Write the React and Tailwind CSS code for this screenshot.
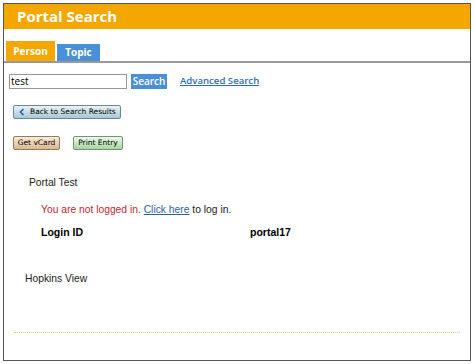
export default function App() {
  return (
    <div className="h-[364px] w-[474px] bg-white p-[3px]" style={{ fontFamily: "'Liberation Sans', Arial, sans-serif" }}>
      <div className="flex h-[358px] flex-col border border-[#555] bg-white">
        {/* header bar */}
        <div className="flex h-[25px] items-center bg-[#f4a700] pl-[13px]">
          <span className="text-[15px] font-bold text-white" style={{ fontFamily: "'Open Sans', sans-serif" }}>
            Portal Search
          </span>
        </div>

        {/* tabs */}
        <div className="mt-[12px] flex items-end gap-[2px] border-b-2 border-[#999] pl-[2px]" style={{ fontFamily: "'Open Sans', sans-serif" }}>
          <div className="flex h-[20px] w-[49px] items-center justify-center bg-[#f4a700] text-[10px] font-bold text-white">Person</div>
          <div className="flex h-[17px] w-[43px] items-center justify-center bg-[#4a90d9] text-[10px] font-bold text-white">Topic</div>
        </div>

        {/* search row */}
        <div className="mt-[11px] flex items-center pl-[5px]" style={{ fontFamily: "'Open Sans', sans-serif" }}>
          <div className="flex h-[15px] w-[118px] items-center border border-[#999] pl-[1px] text-[10px] text-black">test</div>
          <div className="ml-[4px] flex h-[15px] w-[36px] items-center justify-center bg-[#4a90d9] text-[10px] font-semibold text-white">
            Search
          </div>
          <a className="ml-[13px] text-[9.6px] font-semibold text-[#2f6fb0] underline">Advanced Search</a>
        </div>

        {/* back button */}
        <div className="mt-[16px] pl-[9px]" style={{ fontFamily: "'DejaVu Sans', Verdana, sans-serif" }}>
          <div className="flex h-[14px] w-[108px] items-center rounded-[2px] border border-[#6a8a9a] bg-gradient-to-b from-[#e8f3f8] to-[#a9c7d4] pl-[5px] text-[7.5px] text-black">
            <svg width="6" height="8" viewBox="0 0 6 8" className="mr-[5px]">
              <path d="M4.5 1 L1.5 4 L4.5 7" stroke="#2a5db0" strokeWidth="1.6" fill="none" />
            </svg>
            Back to Search Results
          </div>
        </div>

        {/* vcard / print */}
        <div className="mt-[17px] flex items-center pl-[9px]" style={{ fontFamily: "'DejaVu Sans', Verdana, sans-serif" }}>
          <div className="flex h-[14px] w-[47px] items-center justify-center rounded-[2px] border border-[#9a7a55] bg-gradient-to-b from-[#f8ecd8] to-[#d9b88e] text-[7.5px] text-black">
            Get vCard
          </div>
          <div className="ml-[13px] flex h-[14px] w-[50px] items-center justify-center rounded-[2px] border border-[#6a9a6a] bg-gradient-to-b from-[#eef8ea] to-[#a9d4a0] text-[7.5px] text-black">
            Print Entry
          </div>
        </div>

        {/* body text */}
        <div className="mt-[27px] pl-[25px] text-[10.3px] leading-[12px] text-[#222]">Portal Test</div>
        <div className="mt-[15px] pl-[37px] text-[10.3px] leading-[12px] text-[#222]">
          <span className="text-[#c0272d]">You are not logged in.</span>{" "}
          <a className="text-[#2f5f9a] underline">Click here</a> to log in.
        </div>
        <div className="mt-[10px] flex pl-[37px] text-[10.5px] font-bold leading-[12px] text-black">
          <span className="w-[209px]">Login ID</span>
          <span>portal17</span>
        </div>
        <div className="mt-[35px] pl-[21px] text-[10.3px] leading-[12px] text-[#222]">Hopkins View</div>

        {/* dotted rule */}
        <div className="mx-[10px] mt-[47px] border-t border-dotted border-[#e0d27a]" />
      </div>
    </div>
  );
}
